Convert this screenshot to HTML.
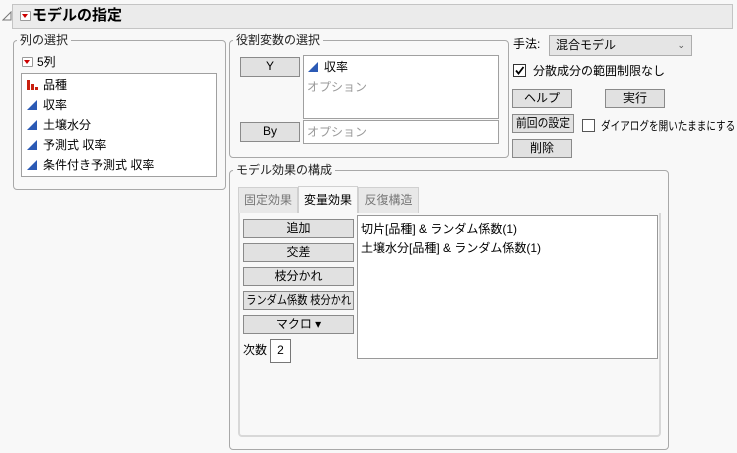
<!DOCTYPE html>
<html><head><meta charset="utf-8"><style>
*{box-sizing:border-box;margin:0;padding:0}
body{width:737px;height:453px;background:#f8f8f8;position:relative;overflow:hidden;font-family:"Liberation Sans","Noto Sans CJK JP",sans-serif;font-size:12px;color:#000}
.a{position:absolute;white-space:nowrap}
.grp{position:absolute;border:1px solid #a8a8a8;border-radius:4px}
.lbl{position:absolute;background:#f8f8f8;padding:0 3px;font-size:12px;line-height:14px;color:#222;white-space:nowrap}
.box{position:absolute;background:#fff;border:1px solid #a0a0a0}
.btn{position:absolute;background:#e1e1e1;border:1px solid #8a8a8a;text-align:center;font-size:12px;line-height:17px;white-space:nowrap;overflow:hidden}
.rb{position:absolute;width:11px;height:10px;background:#fff;border:1px solid #999;border-radius:1px}
.rb:after{content:"";position:absolute;left:1px;top:2px;border-left:3.5px solid transparent;border-right:3.5px solid transparent;border-top:4px solid #c00}
.it{position:absolute;left:5px;height:20px;line-height:20px;font-size:12px;white-space:nowrap}
.tri{display:inline-block;width:0;height:0;border-left:10px solid transparent;border-bottom:10px solid #2b5ab5;vertical-align:-1px;margin-right:6px}
.bar{display:inline-block;width:10px;height:10px;vertical-align:-1px;margin-right:6px;position:relative}
.bar i{position:absolute;bottom:0;background:#c8200f;width:3px}
.gray{color:#999}
.cb{position:absolute;width:13px;height:13px;background:#fff;border:1px solid #333}
.sq{display:inline-block;transform-origin:center;margin:0 -30px}
</style></head><body>
<svg class="a" style="left:2px;top:11px" width="10" height="10"><path d="M1 9 L9 9 L9 1 Z" fill="none" stroke="#777" stroke-width="1"/></svg>
<div class="a" style="left:12px;top:4px;width:721px;height:25px;background:#ebebeb;border:1px solid #c4c4c4"></div>
<div class="rb" style="left:20px;top:11px"></div>
<div class="a" style="left:32px;top:6px;font-size:15px;font-weight:bold;line-height:20px">モデルの指定</div>

<div class="grp" style="left:13px;top:40px;width:213px;height:150px"></div>
<div class="lbl" style="left:17px;top:33px">列の選択</div>
<div class="rb" style="left:22px;top:57px"></div>
<div class="a" style="left:37px;top:55px;line-height:14px">5列</div>
<div class="box" style="left:21px;top:73px;width:196px;height:104px">
<div class="it" style="top:1px"><span class="bar"><i style="left:0;height:10px"></i><i style="left:4px;height:6px"></i><i style="left:8px;height:3px"></i></span>品種</div>
<div class="it" style="top:21px"><span class="tri"></span>収率</div>
<div class="it" style="top:41px"><span class="tri"></span>土壌水分</div>
<div class="it" style="top:61px"><span class="tri"></span>予測式 収率</div>
<div class="it" style="top:81px"><span class="tri"></span>条件付き予測式 収率</div>
</div>

<div class="grp" style="left:229px;top:40px;width:280px;height:118px"></div>
<div class="lbl" style="left:233px;top:33px">役割変数の選択</div>
<div class="btn" style="left:240px;top:57px;width:60px;height:20px">Y</div>
<div class="box" style="left:303px;top:55px;width:196px;height:64px">
<div class="it" style="top:1px;left:4px"><span class="tri"></span>収率</div>
<div class="it gray" style="top:21px;left:3px">オプション</div></div>
<div class="btn" style="left:240px;top:122px;width:60px;height:20px">By</div>
<div class="box" style="left:303px;top:120px;width:196px;height:24px"><div class="it gray" style="top:1px;left:3px">オプション</div></div>

<div class="a" style="left:513px;top:36px;line-height:16px">手法:</div>
<div class="a" style="left:549px;top:35px;width:143px;height:21px;background:#e5e5e5;border:1px solid #adadad;line-height:19px;padding-left:6px">混合モデル<span style="position:absolute;right:6px;top:0;font-size:9px;color:#555">⌄</span></div>
<div class="cb" style="left:513px;top:64px"><svg width="11" height="11" style="position:absolute;left:0;top:0"><path d="M2 5.5 L4.5 8.5 L9.5 2" stroke="#000" stroke-width="1.8" fill="none"/></svg></div>
<div class="a" style="left:533px;top:63px;line-height:16px">分散成分の範囲制限なし</div>
<div class="btn" style="left:512px;top:89px;width:60px;height:19px">ヘルプ</div>
<div class="btn" style="left:605px;top:89px;width:60px;height:19px">実行</div>
<div class="btn" style="left:512px;top:114px;width:62px;height:19px"><span class="sq" style="transform:scaleX(0.9)">前回の設定</span></div>
<div class="cb" style="left:582px;top:119px;border-color:#555"></div>
<div class="a" style="left:601px;top:118px;line-height:16px;transform:scaleX(0.8);transform-origin:left">ダイアログを開いたままにする</div>
<div class="btn" style="left:512px;top:139px;width:60px;height:19px">削除</div>

<div class="grp" style="left:229px;top:170px;width:440px;height:280px"></div>
<div class="lbl" style="left:233px;top:163px">モデル効果の構成</div>
<div class="a" style="left:238px;top:187px;width:60px;height:27px;background:#e8e8e8;border:1px solid #d0d0d0;border-bottom:none;text-align:center;line-height:24px;color:#777">固定効果</div>
<div class="a" style="left:298px;top:186px;width:60px;height:28px;background:#f8f8f8;border:1px solid #d0d0d0;border-bottom:none;text-align:center;line-height:26px">変量効果</div>
<div class="a" style="left:358px;top:187px;width:61px;height:27px;background:#e8e8e8;border:1px solid #d0d0d0;border-bottom:none;text-align:center;line-height:24px;color:#777">反復構造</div>
<div class="a" style="left:238px;top:213px;width:423px;height:224px;border:2px solid #d8d8d8;border-top:none;border-radius:0 0 4px 4px;background:#f8f8f8"></div>
<div class="btn" style="left:243px;top:219px;width:111px;height:19px">追加</div>
<div class="btn" style="left:243px;top:243px;width:111px;height:19px">交差</div>
<div class="btn" style="left:243px;top:267px;width:111px;height:19px">枝分かれ</div>
<div class="btn" style="left:243px;top:291px;width:111px;height:19px"><span class="sq" style="transform:scaleX(0.85)">ランダム係数 枝分かれ</span></div>
<div class="btn" style="left:243px;top:315px;width:111px;height:19px">マクロ ▾</div>
<div class="a" style="left:243px;top:342px;line-height:16px">次数</div>
<div class="box" style="left:270px;top:339px;width:21px;height:24px;border-color:#777;text-align:center;line-height:21px">2</div>
<div class="box" style="left:357px;top:215px;width:301px;height:144px;border-color:#999">
<div class="it" style="top:3px;left:3px">切片[品種] &amp; ランダム係数(1)</div>
<div class="it" style="top:22px;left:3px">土壌水分[品種] &amp; ランダム係数(1)</div></div>
</body></html>
